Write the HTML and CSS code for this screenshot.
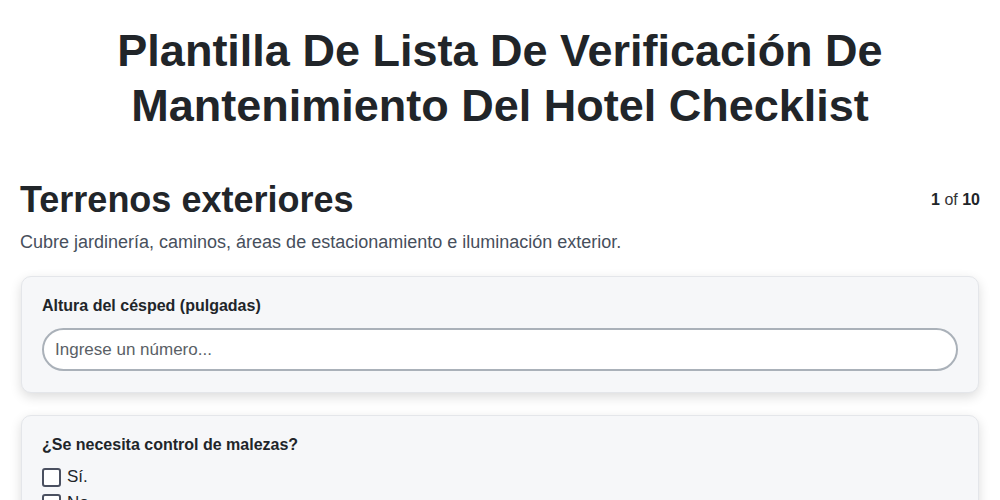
FILE: index.html
```html
<!DOCTYPE html>
<html lang="es">
<head>
    <meta charset="UTF-8">
    <meta name="viewport" content="width=device-width, initial-scale=1.0">
    <title>Plantilla De Lista De Verificación De Mantenimiento Del Hotel Checklist</title>
    <link rel="stylesheet" href="styles.css">
</head>
<body>
    <div class="page">
        <h1>Plantilla De Lista De Verificación De Mantenimiento Del Hotel Checklist</h1>

        <div class="section-head">
            <h2>Terrenos exteriores</h2>
            <div class="step"><b>1</b> of <b>10</b></div>
        </div>
        <p class="section-desc">Cubre jardinería, caminos, áreas de estacionamiento e iluminación exterior.</p>

        <div class="card">
            <label class="field-label" for="lawnHeight">Altura del césped (pulgadas)</label>
            <input type="text" id="lawnHeight" class="text-input" placeholder="Ingrese un número...">
        </div>

        <div class="card">
            <div class="field-label">¿Se necesita control de malezas?</div>
            <label class="check"><input type="checkbox"> Sí.</label>
            <label class="check"><input type="checkbox"> No.</label>
        </div>
    </div>
</body>
</html>
```

FILE: styles.css
```css
body {
    font-family: "Liberation Sans", Arial, sans-serif;
    background-color: #ffffff;
    color: #1f2328;
    margin: 0;
    padding: 0;
}

.page {
    padding: 23px 20px 20px;
}

h1 {
    margin: 0 0 45px;
    font-size: 45px;
    line-height: 55px;
    text-align: center;
    color: #212529;
}

.section-head {
    display: flex;
    justify-content: space-between;
    align-items: center;
}

h2 {
    margin: 0;
    font-size: 36px;
    line-height: 43px;
    color: #212529;
}

.step {
    font-size: 16px;
    color: #333333;
}

.step b {
    color: #212529;
}

.section-desc {
    margin: 11px 0 23px;
    font-size: 18px;
    color: #474f5c;
}

.card {
    background-color: #f6f7f9;
    border: 1px solid #e4e6ea;
    border-radius: 10px;
    box-shadow: 0 4px 12px rgba(0, 0, 0, 0.14);
    padding: 20px 20px 21px;
    margin: 0 1px 22px;
}

.field-label {
    display: block;
    font-weight: bold;
    font-size: 16px;
    color: #212529;
    margin-bottom: 13px;
}

.text-input {
    display: block;
    box-sizing: border-box;
    width: 100%;
    height: 43px;
    padding: 0 11px;
    border: 2px solid #aab1b9;
    border-radius: 22px;
    background-color: #ffffff;
    font-family: inherit;
    font-size: 17px;
    color: #212529;
}

.text-input::placeholder {
    color: #5a5f66;
}

.check {
    display: flex;
    align-items: center;
    gap: 6px;
    font-size: 17px;
    color: #212529;
    margin-bottom: 6px;
}

.check input {
    appearance: none;
    width: 19px;
    height: 19px;
    margin: 0;
    border: 2px solid #4a5060;
    border-radius: 3px;
    background-color: #ffffff;
}
```
